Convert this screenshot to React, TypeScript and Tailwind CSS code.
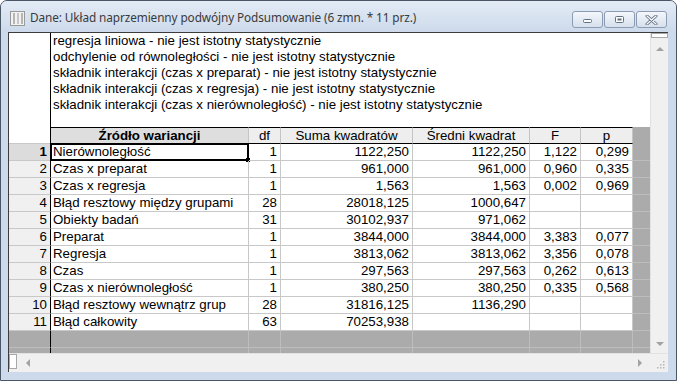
import React from "react";

const notes = [
  "regresja liniowa - nie jest istotny statystycznie",
  "odchylenie od równoległości - nie jest istotny statystycznie",
  "składnik interakcji (czas x preparat) - nie jest istotny statystycznie",
  "składnik interakcji (czas x regresja) - nie jest istotny statystycznie",
  "składnik interakcji (czas x nierównoległość) - nie jest istotny statystycznie",
];

const cols = ["w-[198px]", "w-[32px]", "w-[132px]", "w-[117px]", "w-[51px]", "w-[52px]"];
const heads = ["Źródło wariancji", "df", "Suma kwadratów", "Średni kwadrat", "F", "p"];

const rows = [
  ["1", "Nierównoległość", "1", "1122,250", "1122,250", "1,122", "0,299"],
  ["2", "Czas x preparat", "1", "961,000", "961,000", "0,960", "0,335"],
  ["3", "Czas x regresja", "1", "1,563", "1,563", "0,002", "0,969"],
  ["4", "Błąd resztowy między grupami", "28", "28018,125", "1000,647", "", ""],
  ["5", "Obiekty badań", "31", "30102,937", "971,062", "", ""],
  ["6", "Preparat", "1", "3844,000", "3844,000", "3,383", "0,077"],
  ["7", "Regresja", "1", "3813,062", "3813,062", "3,356", "0,078"],
  ["8", "Czas", "1", "297,563", "297,563", "0,262", "0,613"],
  ["9", "Czas x nierównoległość", "1", "380,250", "380,250", "0,335", "0,568"],
  ["10", "Błąd resztowy wewnątrz grup", "28", "31816,125", "1136,290", "", ""],
  ["11", "Błąd całkowity", "63", "70253,938", "", "", ""],
];

function CaptionButton({ kind }: { kind: "min" | "max" | "close" }) {
  return (
    <div className="w-[31px] h-[17px] mr-px rounded-[3px] border border-[#8c9db3] bg-gradient-to-b from-[#f4f7fb] to-[#d6e0ec] flex items-center justify-center">
      {kind === "min" && (
        <svg width="11" height="9" viewBox="0 0 11 9">
          <rect x="1.5" y="4.5" width="8" height="3" rx="1" fill="#fff" stroke="#5f6f84" />
        </svg>
      )}
      {kind === "max" && (
        <svg width="11" height="9" viewBox="0 0 11 9">
          <rect x="1.5" y="1.5" width="8" height="6" rx="1" fill="#fff" stroke="#5f6f84" />
          <rect x="3.5" y="3.5" width="4" height="2" fill="#5f6f84" />
        </svg>
      )}
      {kind === "close" && (
        <svg width="13" height="10" viewBox="0 0 13 10">
          <path d="M2 1 L11 9 M11 1 L2 9" stroke="#5f6f84" strokeWidth="3" strokeLinecap="round" />
          <path d="M2 1 L11 9 M11 1 L2 9" stroke="#fff" strokeWidth="1.2" strokeLinecap="round" />
        </svg>
      )}
    </div>
  );
}

function Tri({ dir }: { dir: "up" | "down" | "left" | "right" }) {
  const pts = {
    up: "0,5 4,1 8,5",
    down: "0,1 8,1 4,5",
    left: "5,0 5,8 1,4",
    right: "1,0 1,8 5,4",
  }[dir];
  const vert = dir === "up" || dir === "down";
  return (
    <svg width={vert ? 8 : 6} height={vert ? 6 : 8} viewBox={vert ? "0 0 8 6" : "0 0 6 8"}>
      <polygon points={pts} fill="#a2a2a2" />
    </svg>
  );
}

export default function App() {
  return (
    <div className="w-[677px] h-[381px] border border-[#4a5566] rounded-t-[7px] bg-[#cddaeb] flex flex-col overflow-hidden font-['Liberation_Sans',Arial,sans-serif] text-[13.3px] text-black">
      {/* title bar */}
      <div className="h-[31px] shrink-0 flex items-center bg-gradient-to-b from-[#e3ebf5] to-[#cddaeb] pl-[9px] pr-[8px]">
        <svg width="15" height="15" viewBox="0 0 15 15" className="mt-[3px]">
          <rect x="0.5" y="0.5" width="14" height="14" fill="#f2f2f2" stroke="#9a9a9a" />
          <rect x="3" y="2" width="2" height="11" fill="#b5b5b5" />
          <rect x="7" y="2" width="2" height="11" fill="#c6c6c6" />
          <rect x="11" y="2" width="2" height="11" fill="#b5b5b5" />
        </svg>
        <span className="ml-[5px] mt-[3px] font-['Noto_Sans',sans-serif] text-[11.8px] text-[#3a3a3a] tracking-[-0.1px]">
          Dane: Układ naprzemienny podwójny Podsumowanie (6 zmn. * 11 prz.)
        </span>
        <div className="ml-auto mt-[6px] flex">
          <CaptionButton kind="min" />
          <CaptionButton kind="max" />
          <CaptionButton kind="close" />
        </div>
      </div>

      {/* client */}
      <div className="ml-[7px] mr-[8px] border-t border-l border-[#3c3c3c] flex flex-col bg-white">
        <div className="flex h-[320px]">
          {/* spreadsheet */}
          <div className="w-[641px] flex flex-col">
            {/* notes header */}
            <div className="h-[94px] flex">
              <div className="w-[42px] border-r border-black" />
              <div className="pl-[2px] leading-[16px] whitespace-nowrap">
                {notes.map((n) => (
                  <div key={n}>{n}</div>
                ))}
              </div>
            </div>

            {/* column headers */}
            <div className="h-[17px] flex">
              <div className="w-[42px] border-r border-black border-b border-b-[#c8c8c8]" />
              {heads.map((h, i) => (
                <div
                  key={h}
                  className={`${cols[i]} border-y border-black border-r border-r-[#c4c4c4] ${i === 0 ? "bg-[#dedede] font-bold" : "bg-[#eeeeee]"} flex items-center justify-center leading-none whitespace-nowrap`}
                >
                  {h}
                </div>
              ))}
              <div className="w-[17px] bg-[#ababab]" />
            </div>

            {/* rows */}
            {rows.map((r, ri) => (
              <div key={r[0]} className="h-[17px] flex leading-none whitespace-nowrap">
                <div
                  className={`w-[42px] border-r border-black border-b border-b-[#c8c8c8] flex items-center justify-end pr-[3px] ${ri === 0 ? "bg-[#dcdcdc] font-bold" : "bg-[#f0f0f0]"}`}
                >
                  {r[0]}
                </div>
                {r.slice(1).map((c, ci) => (
                  <div
                    key={ci}
                    className={`${cols[ci]} relative border-r border-b border-[#c8c8c8] flex items-center ${ci === 0 ? "justify-start pl-[2px]" : "justify-end pr-[3px]"}`}
                  >
                    {c}
                    {ri === 0 && ci === 0 && (
                      <div className="absolute -left-[1px] -top-[1px] w-[199px] h-[18px] border-2 border-black">
                        <div className="absolute -right-[3px] -bottom-[3px] w-[4px] h-[4px] bg-black" />
                      </div>
                    )}
                  </div>
                ))}
                <div className="w-[17px] bg-[#ababab] border-b border-[#bdbdbd]" />
              </div>
            ))}

            {/* empty area */}
            <div className="flex-1 flex flex-col bg-[#ababab]">
              <div className="h-[17px] flex">
                <div className="w-[42px] border-r border-black border-b border-b-[#bdbdbd]" />
                {cols.map((c, i) => (
                  <div key={i} className={`${c} border-r border-b border-[#bdbdbd]`} />
                ))}
                <div className="w-[17px] border-b border-[#bdbdbd]" />
              </div>
              <div className="flex-1 flex">
                <div className="w-[42px] border-r border-black" />
                {cols.map((c, i) => (
                  <div key={i} className={`${c} border-r border-[#bdbdbd]`} />
                ))}
              </div>
            </div>
          </div>

          {/* vertical scrollbar */}
          <div className="w-[18px] bg-[#f0f0f0] border-l border-[#e2e2e2] flex flex-col items-center">
            <div className="w-[17px] h-[5px] bg-white border border-[#a8a8a8]" />
            <div className="mt-[8px]">
              <Tri dir="up" />
            </div>
            <div className="mt-auto mb-[6px]">
              <Tri dir="down" />
            </div>
          </div>
        </div>

        {/* horizontal scrollbar */}
        <div className="h-[19px] flex bg-[#f0f0f0] border-t border-[#e2e2e2]">
          <div className="w-[641px] flex items-center">
            <div className="self-start w-[8px] h-[15px] bg-white border border-[#a8a8a8]" />
            <div className="ml-[8px]">
              <Tri dir="left" />
            </div>
            <div className="ml-auto mr-[7px]">
              <Tri dir="right" />
            </div>
          </div>
          <div className="w-[18px] flex items-end justify-end p-[3px]">
            <svg width="9" height="9" viewBox="0 0 9 9">
              {[
                [7, 1],
                [7, 4],
                [4, 4],
                [7, 7],
                [4, 7],
                [1, 7],
              ].map(([x, y], i) => (
                <rect key={i} x={x} y={y} width="1.5" height="1.5" fill="#b8b8b8" />
              ))}
            </svg>
          </div>
        </div>
      </div>
      <div className="flex-1" />
    </div>
  );
}
